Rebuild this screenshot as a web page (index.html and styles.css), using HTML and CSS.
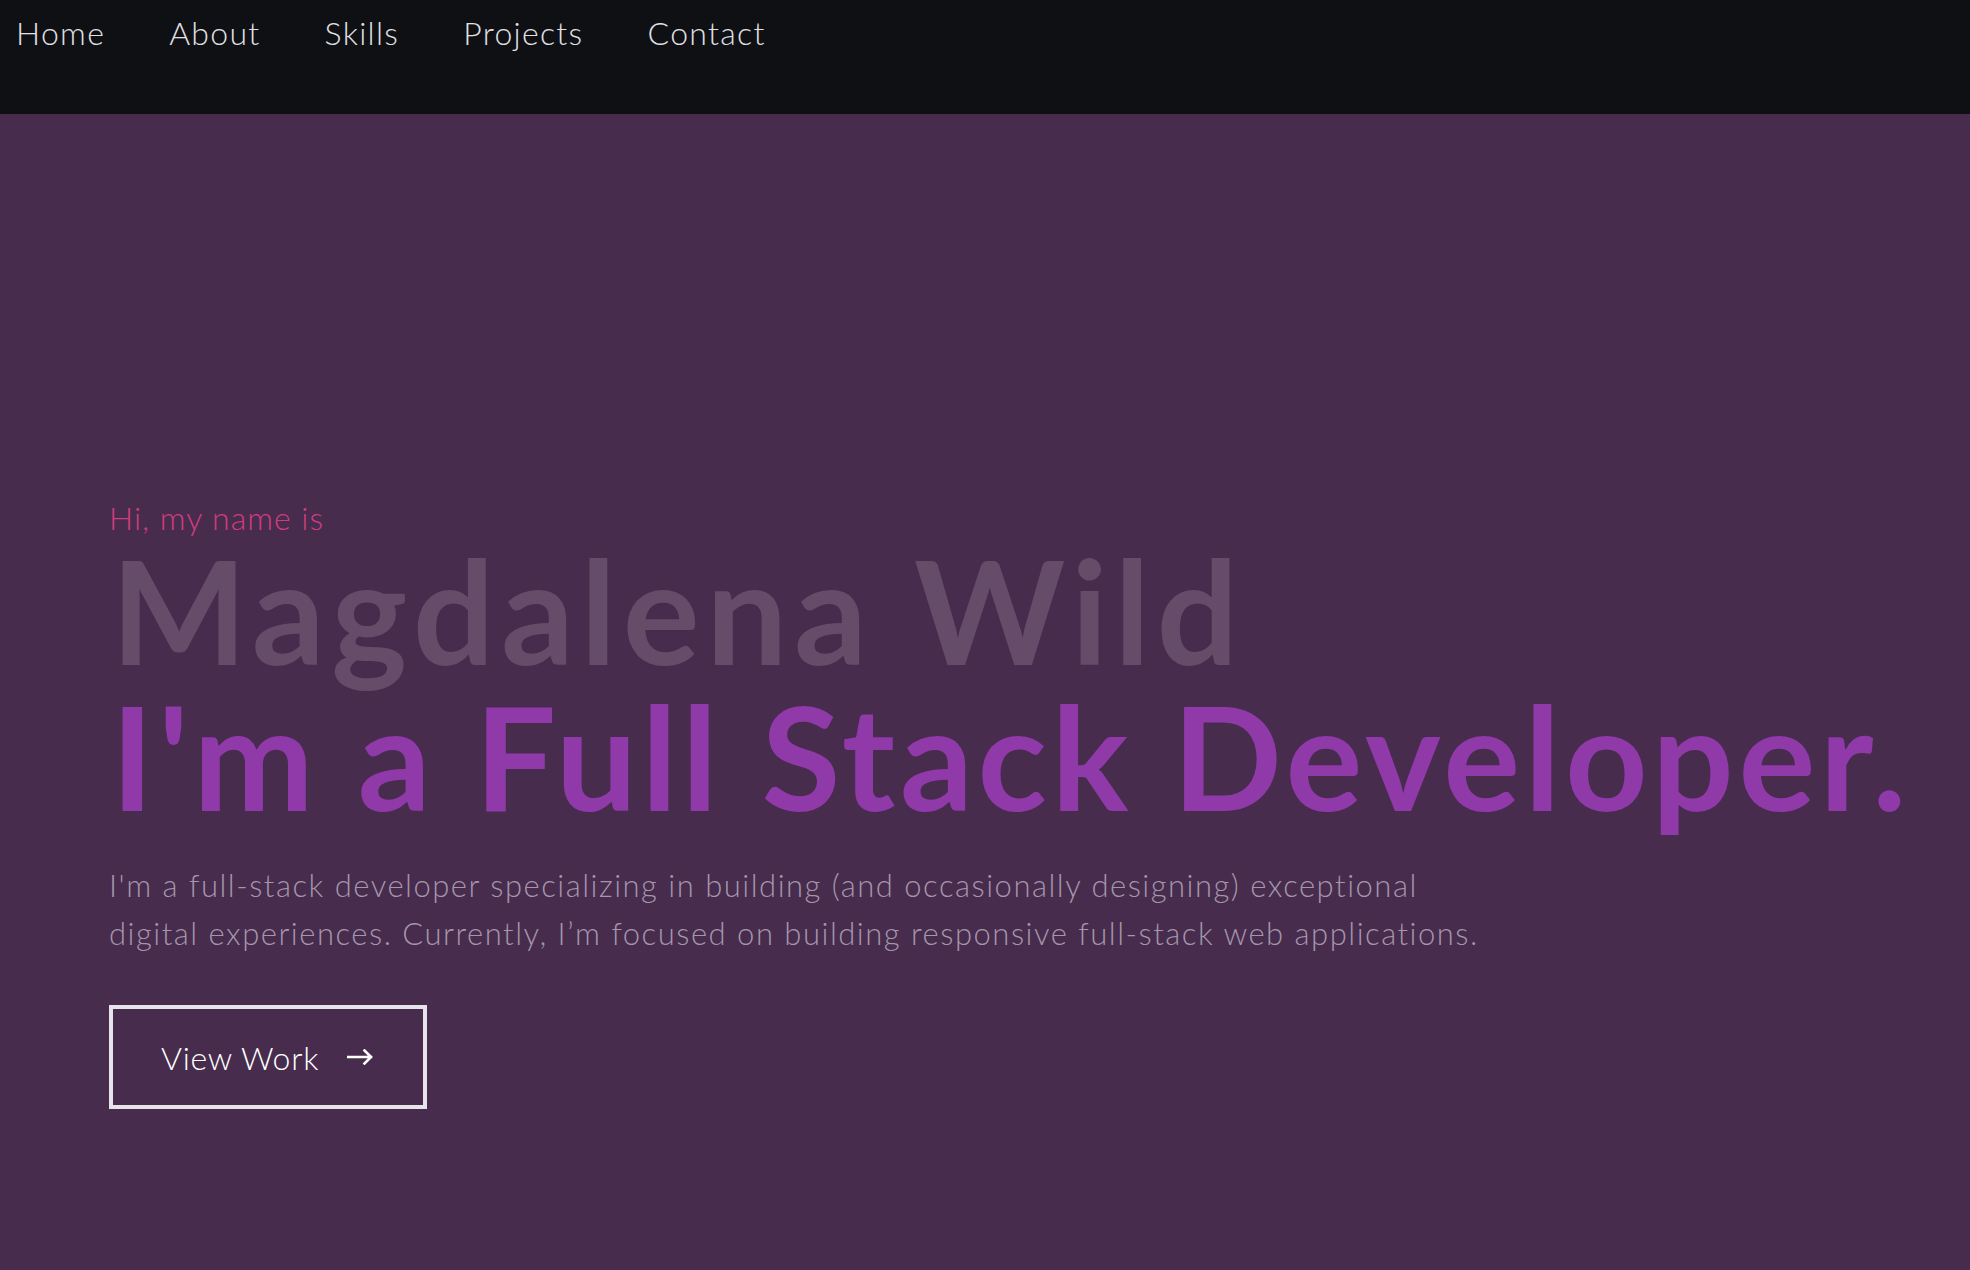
FILE: index.html
```html
<!DOCTYPE html>
<html lang="en">
<head>
<meta charset="utf-8">
<title>Magdalena Wild</title>
<link rel="stylesheet" href="styles.css">
</head>
<body>
<header class="nav">
  <ul class="nav-list">
    <li><a class="nav-link" href="#home">Home</a></li>
    <li><a class="nav-link" href="#about">About</a></li>
    <li><a class="nav-link" href="#skills">Skills</a></li>
    <li><a class="nav-link" href="#projects">Projects</a></li>
    <li><a class="nav-link" href="#contact">Contact</a></li>
  </ul>
</header>
<main class="hero" id="home">
  <div class="hero-inner">
    <p class="greeting">Hi, my name is</p>
    <h1 class="name">Magdalena Wild</h1>
    <h2 class="tagline">I'm a Full Stack Developer.</h2>
    <p class="intro">I'm a full-stack developer specializing in building (and occasionally designing) exceptional<br> digital experiences. Currently, I’m focused on building responsive full-stack web applications.</p>
    <a class="btn" href="#projects"><span>View Work</span><svg class="btn-arrow" width="26" height="16" viewBox="0 0 26 16" aria-hidden="true"><path d="M1 8H24M17.5 1.5L24 8L17.5 14.5" fill="none" stroke="currentColor" stroke-width="2.6" stroke-linecap="square"/></svg></a>
  </div>
</main>
</body>
</html>
```
FILE: styles.css
```css
* { box-sizing: border-box; }
html, body { margin: 0; padding: 0; }
body {
  background: #472c4e;
  font-family: "Lato", "Open Sans", sans-serif;
  color: #e4e2e8;
  min-height: 1270px;
}
.nav {
  background: #0f1014;
  height: 114px;
}
.nav-list {
  list-style: none;
  margin: 0;
  padding: 14px 0 0 16px;
  display: flex;
  gap: 64px;
}
.nav-link {
  color: #e1e1e6;
  text-decoration: none;
  font-size: 32px;
  font-weight: 300;
  line-height: 38px;
  letter-spacing: 1.3px;
}
.hero {
  padding: 384px 0 0 109px;
}
.hero-inner {
  display: flex;
  flex-direction: column;
  align-items: flex-start;
}
.greeting {
  margin: 0;
  color: #d23c7e;
  font-size: 32px;
  font-weight: 300;
  line-height: 40px;
  letter-spacing: 1px;
}
.name, .tagline {
  margin: 0 0 0 2px;
  font-size: 144px;
  line-height: 144px;
  font-weight: 700;
}
.name {
  color: #654c68;
  letter-spacing: 6.5px;
}
.tagline {
  margin-top: 2px;
  color: #9039a9;
  letter-spacing: 4.5px;
}
.intro {
  margin: 33px 0 0;
  max-width: 1600px;
  color: #a596ab;
  font-size: 31px;
  font-weight: 300;
  line-height: 48px;
  letter-spacing: 1.5px;
}
.btn {
  margin-top: 48px;
  display: flex;
  align-items: center;
  gap: 28px;
  height: 104px;
  padding: 0 50px 0 48px;
  border: 4px solid #e6e3ea;
  color: #ffffff;
  text-decoration: none;
  font-size: 32px;
  font-weight: 300;
  letter-spacing: 0.7px;
}
.btn-arrow { display: block; }
```
